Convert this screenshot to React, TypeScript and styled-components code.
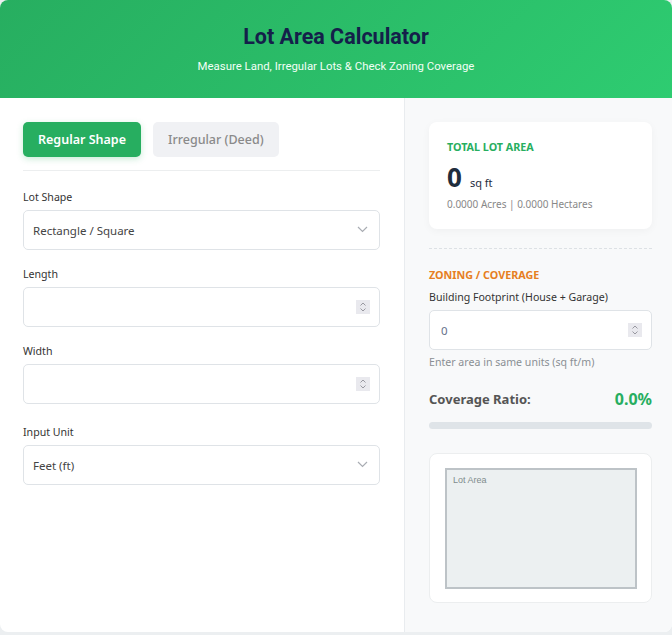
import React, { useState } from 'react'
import styled, { createGlobalStyle } from 'styled-components'

const GlobalStyle = createGlobalStyle`
  html, body {
    margin: 0;
    padding: 0;
    background: #eceff1;
  }
  * {
    box-sizing: border-box;
  }
  body {
    font-family: 'Noto Sans', 'Open Sans', sans-serif;
    color: #333;
  }
`

const Card = styled.div`
  width: 672px;
  background: #fff;
  border-radius: 8px;
  overflow: hidden;
`

const Header = styled.header`
  height: 98px;
  background: linear-gradient(135deg, #27ae60, #2ecc71);
  text-align: center;
  padding-top: 24px;
  font-family: Roboto, 'Liberation Sans', sans-serif;
`

const Title = styled.h1`
  margin: 0;
  font-size: 21.5px;
  font-weight: 700;
  color: #14204a;
  line-height: 26px;
`

const Subtitle = styled.p`
  margin: 9px 0 0;
  font-size: 11.4px;
  color: #f1fff6;
`

const Body = styled.div`
  display: grid;
  grid-template-columns: 404px 1fr;
`

const LeftPanel = styled.section`
  padding: 24px 24px 24px 23px;
`

const RightPanel = styled.section`
  background: #f8f9fa;
  border-left: 1px solid #e9ecef;
  padding: 24px 22px 29px 24px;
`

const Tabs = styled.div`
  display: flex;
  gap: 12px;
  padding-bottom: 13px;
  border-bottom: 1px solid #eceeef;
  margin-bottom: 19px;
`

const Tab = styled.button<{ $active?: boolean }>`
  height: 35px;
  padding: 0 15px;
  border: none;
  border-radius: 5px;
  font-family: 'Noto Sans', sans-serif;
  font-size: 12.5px;
  font-weight: ${({ $active }) => ($active ? 600 : 500)};
  cursor: pointer;
  background: ${({ $active }) => ($active ? '#27ae60' : '#f0f1f4')};
  color: ${({ $active }) => ($active ? '#fff' : '#8a8a8a')};
  box-shadow: ${({ $active }) => ($active ? '0 2px 6px rgba(39,174,96,0.25)' : 'none')};
`

const Field = styled.div<{ $gap?: number }>`
  margin-bottom: ${({ $gap }) => $gap ?? 17}px;
`

const Label = styled.label`
  display: block;
  font-size: 10.6px;
  color: #333;
  margin-bottom: 6px;
  line-height: 14px;
`

const Control = styled.div`
  position: relative;
`

const Select = styled.select`
  display: block;
  width: 100%;
  height: 40px;
  border: 1px solid #dfe3e7;
  border-radius: 5px;
  padding: 0 9px;
  font-family: 'Noto Sans', sans-serif;
  font-size: 11.5px;
  color: #444;
  background: #fff;
  appearance: none;
  -webkit-appearance: none;
`

const Chevron = styled.svg`
  position: absolute;
  right: 12px;
  top: 50%;
  margin-top: -4px;
  pointer-events: none;
`

const NumberInput = styled.input`
  display: block;
  width: 100%;
  height: 40px;
  border: 1px solid #dfe3e7;
  border-radius: 5px;
  padding: 0 11px;
  font-family: 'Noto Sans', sans-serif;
  font-size: 11.5px;
  color: #66708a;
  background: #fff;
  -moz-appearance: textfield;

  &::-webkit-inner-spin-button,
  &::-webkit-outer-spin-button {
    -webkit-appearance: none;
    margin: 0;
  }
`

const Spinner = styled.svg`
  position: absolute;
  right: 10px;
  top: 50%;
  margin-top: -7px;
  pointer-events: none;
`

const ResultCard = styled.div`
  background: #fff;
  border-radius: 8px;
  padding: 18px;
  box-shadow: 0 2px 8px rgba(0, 0, 0, 0.04);
`

const ResultLabel = styled.div<{ $color: string }>`
  font-size: 10.75px;
  font-weight: 700;
  color: ${({ $color }) => $color};
  text-transform: uppercase;
  line-height: 14px;
`

const BigValue = styled.div`
  margin-top: 8px;
  height: 30px;
  display: flex;
  align-items: baseline;
  gap: 8px;
  color: #1f2d3d;
  line-height: 30px;

  strong {
    font-size: 26px;
    font-weight: 700;
  }
  span {
    font-size: 11px;
  }
`

const SubValue = styled.div`
  margin-top: 5px;
  font-size: 10px;
  line-height: 14px;
  color: #888;
`

const Divider = styled.hr`
  border: none;
  border-top: 1px dashed #dde1e5;
  margin: 19px 0;
`

const FootprintLabel = styled(Label)`
  margin-top: 8px;
`

const Hint = styled.div`
  font-size: 10.6px;
  line-height: 14px;
  color: #8a8f94;
  margin-top: 5px;
`

const CoverageRow = styled.div`
  display: flex;
  justify-content: space-between;
  align-items: center;
  margin-top: 20px;
  line-height: 20px;
  font-weight: 700;
`

const CoverageLabel = styled.span`
  font-size: 13px;
  color: #555;
`

const CoverageValue = styled.span`
  font-size: 16px;
  color: #27ae60;
`

const Progress = styled.div`
  margin-top: 13px;
  height: 7px;
  border-radius: 4px;
  background: #dfe4e8;
  overflow: hidden;
`

const ProgressFill = styled.div`
  height: 100%;
  background: #27ae60;
`

const Preview = styled.div`
  margin-top: 24px;
  background: #fff;
  border: 1px solid #eceeef;
  border-radius: 8px;
  padding: 14px 14px 14px 15px;
  height: 150px;

  svg {
    display: block;
  }
`

const SelectChevron = () => (
  <Chevron width="11" height="7" viewBox="0 0 11 7">
    <path d="M1 1l4.5 4.5L10 1" fill="none" stroke="#a9adb3" strokeWidth="1.2" />
  </Chevron>
)

const SpinBox = () => (
  <Spinner width="14" height="14" viewBox="0 0 14 14">
    <rect width="14" height="14" fill="#e9e9ee" />
    <path d="M4.5 5.5L7 3l2.5 2.5M4.5 8.5L7 11l2.5-2.5" fill="none" stroke="#8e8e96" strokeWidth="0.9" />
  </Spinner>
)

export default function App() {
  const [mode, setMode] = useState<'regular' | 'irregular'>('regular')
  const coverage = 0

  return (
    <>
      <GlobalStyle />
      <Card>
        <Header>
          <Title>Lot Area Calculator</Title>
          <Subtitle>Measure Land, Irregular Lots &amp; Check Zoning Coverage</Subtitle>
        </Header>
        <Body>
          <LeftPanel>
            <Tabs>
              <Tab $active={mode === 'regular'} onClick={() => setMode('regular')}>
                Regular Shape
              </Tab>
              <Tab $active={mode === 'irregular'} onClick={() => setMode('irregular')}>
                Irregular (Deed)
              </Tab>
            </Tabs>
            <Field>
              <Label>Lot Shape</Label>
              <Control>
                <Select defaultValue="rect">
                  <option value="rect">Rectangle / Square</option>
                  <option value="tri">Triangle</option>
                  <option value="circle">Circle</option>
                </Select>
                <SelectChevron />
              </Control>
            </Field>
            <Field>
              <Label>Length</Label>
              <Control>
                <NumberInput type="number" />
                <SpinBox />
              </Control>
            </Field>
            <Field $gap={21}>
              <Label>Width</Label>
              <Control>
                <NumberInput type="number" />
                <SpinBox />
              </Control>
            </Field>
            <Field>
              <Label>Input Unit</Label>
              <Control>
                <Select defaultValue="ft">
                  <option value="ft">Feet (ft)</option>
                  <option value="m">Meters (m)</option>
                </Select>
                <SelectChevron />
              </Control>
            </Field>
          </LeftPanel>
          <RightPanel>
            <ResultCard>
              <ResultLabel $color="#27ae60">Total Lot Area</ResultLabel>
              <BigValue>
                <strong>0</strong>
                <span>sq ft</span>
              </BigValue>
              <SubValue>0.0000 Acres | 0.0000 Hectares</SubValue>
            </ResultCard>
            <Divider />
            <ResultLabel $color="#e67e22">Zoning / Coverage</ResultLabel>
            <FootprintLabel>Building Footprint (House + Garage)</FootprintLabel>
            <Control>
              <NumberInput type="number" defaultValue={0} />
              <SpinBox />
            </Control>
            <Hint>Enter area in same units (sq ft/m)</Hint>
            <CoverageRow>
              <CoverageLabel>Coverage Ratio:</CoverageLabel>
              <CoverageValue>{coverage.toFixed(1)}%</CoverageValue>
            </CoverageRow>
            <Progress>
              <ProgressFill style={{ width: `${coverage}%` }} />
            </Progress>
            <Preview>
              <svg width="192" height="121" viewBox="0 0 192 121">
                <rect x="1" y="1" width="190" height="119" fill="#ecf0f1" stroke="#bdc3c7" strokeWidth="2" />
                <text x="8" y="15" fontSize="9" fill="#7f8c8d" fontFamily="'Liberation Sans', Arial, sans-serif">
                  Lot Area
                </text>
              </svg>
            </Preview>
          </RightPanel>
        </Body>
      </Card>
    </>
  )
}
